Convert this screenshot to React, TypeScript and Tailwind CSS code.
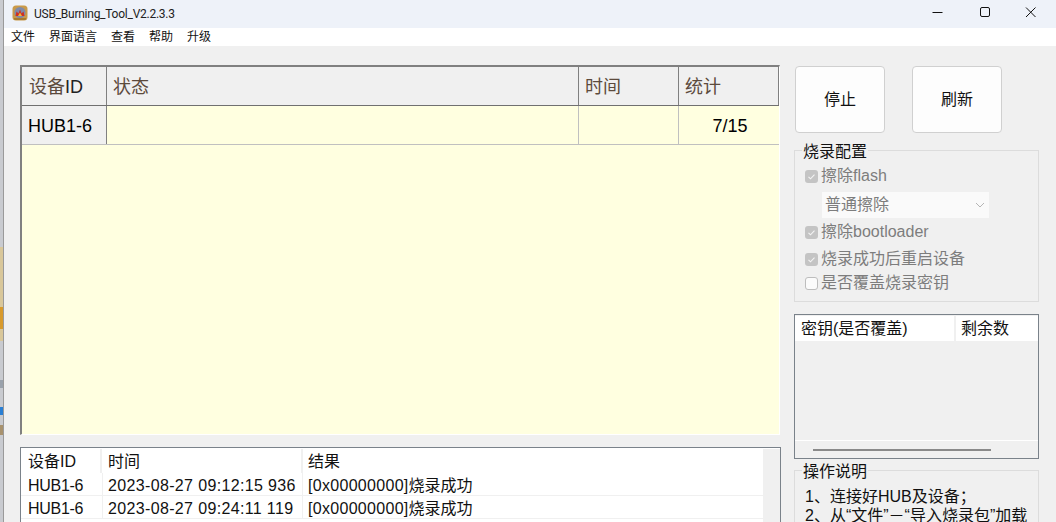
const cjk = "font-['Liberation_Sans','Noto_Sans_CJK_SC',sans-serif]";

const menus = ["文件", "界面语言", "查看", "帮助", "升级"];

const logRows = [
  { id: "HUB1-6", time: "2023-08-27 09:12:15 936", code: "[0x00000000]" },
  { id: "HUB1-6", time: "2023-08-27 09:24:11 119", code: "[0x00000000]" },
];

function AppLogo() {
  return (
    <svg width="16" height="16" viewBox="0 0 16 16" className="mt-[-2px]">
      <rect x="0.5" y="0.5" width="15" height="15" rx="3.5" fill="#c99a4a" />
      <path d="M2 13h12v1a1 1 0 0 1-1 1H3a1 1 0 0 1-1-1z" fill="#a87a30" />
      <circle cx="8" cy="7.5" r="5.5" fill="#7f8aa8" />
      <path d="M3.5 11l1-4.5 2 2 1.5-4 1.5 4 2-2 1 4.5z" fill="#cf2f22" />
      <path d="M6 11l2-3.5 2 3.5z" fill="#f0b53c" />
    </svg>
  );
}

function WindowButtons() {
  return (
    <div className="flex items-center">
      <svg width="46" height="28" viewBox="0 0 46 28">
        <path d="M16.5 12.5h10" stroke="#111" strokeWidth="1" />
      </svg>
      <svg width="46" height="28" viewBox="0 0 46 28">
        <rect x="18.5" y="7.5" width="9" height="9" rx="1.5" fill="none" stroke="#111" />
      </svg>
      <svg width="46" height="28" viewBox="0 0 46 28" className="mr-[2px]">
        <path d="M18 7.5l9.5 9.5M27.5 7.5L18 17" stroke="#111" strokeWidth="1" />
      </svg>
    </div>
  );
}

function HeaderCell({ className, children }: { className: string; children: React.ReactNode }) {
  return (
    <div className={`flex items-center h-full pt-[3px] border-r border-[#808080] text-[18px] text-[#5c4a3c] ${className}`}>
      {children}
    </div>
  );
}

function DeviceGrid() {
  return (
    <div className="w-[760px] h-[370px] bg-[#ffffe0] border-l-2 border-t-2 border-[#808080] border-r border-r-white border-b border-b-white flex flex-col">
      <div className="flex h-[39px] bg-[#f0f0f0] border-b border-[#707070]">
        <HeaderCell className="w-[85px] pl-[7px]">
          设备<span className="text-[#222]">ID</span>
        </HeaderCell>
        <HeaderCell className="w-[472px] pl-[6px]">状态</HeaderCell>
        <HeaderCell className="w-[100px] pl-[6px]">时间</HeaderCell>
        <HeaderCell className="flex-1 pl-[6px]">统计</HeaderCell>
      </div>
      <div className="flex h-[39px] border-b border-[#c0c0c0]">
        <div className="w-[85px] bg-[#f0f0f0] border-r border-[#808080] flex items-center pl-[6px] pt-[2px] text-[18px] text-black">
          HUB1-6
        </div>
        <div className="w-[472px] border-r border-[#c0c0c0]" />
        <div className="w-[100px] border-r border-[#c0c0c0]" />
        <div className="flex-1 flex items-center justify-center pt-[2px] pl-[2px] text-[18px] text-black">7/15</div>
      </div>
    </div>
  );
}

function LogList() {
  return (
    <div className="w-[761px] h-[80px] mt-[12px] border-l border-t border-r border-[#7a828a] bg-white flex text-[16px] text-[#111]">
      <div className="flex-1 flex flex-col">
        <div className="flex h-[24px] mt-[1px]">
          <div className="w-[81px] pl-[7px] leading-[25px] border-r-2 border-[#f0f0f0]">设备ID</div>
          <div className="w-[201px] pl-[6px] leading-[25px] border-r-2 border-[#f0f0f0]">时间</div>
          <div className="pl-[5px] leading-[25px]">结果</div>
        </div>
        {logRows.map((row) => (
          <div key={row.time} className="flex h-[23px] border-b border-[#f0f0f0]">
            <div className="w-[82px] pl-[7px] leading-[25px] border-r border-[#f0f0f0] tracking-[-0.3px]">{row.id}</div>
            <div className="w-[200px] pl-[5px] leading-[25px] border-r border-[#f0f0f0] whitespace-nowrap tracking-[0.35px]">
              {row.time}
            </div>
            <div className="pl-[5px] leading-[25px] whitespace-nowrap">
              <span className="tracking-[0.3px]">{row.code}</span>烧录成功
            </div>
          </div>
        ))}
      </div>
      <div className="w-[17px] h-full bg-[#f0f0f0] mt-[1px]" />
    </div>
  );
}

function CheckRow({ label, checked = true, className = "" }: { label: string; checked?: boolean; className?: string }) {
  return (
    <div className={`flex items-center h-[20px] text-[16px] text-[#7d7d7d] whitespace-nowrap ${className}`}>
      <span
        className={`w-[13px] h-[13px] rounded-[3px] mr-[3px] flex items-center justify-center ${
          checked ? "bg-[#c4c4c4]" : "bg-[#fbfbfb] border border-[#bdbdbd]"
        }`}
      >
        {checked && (
          <svg width="9" height="9" viewBox="0 0 9 9">
            <path d="M1.5 4.8l2 2 4-4.2" fill="none" stroke="#f4f4f4" strokeWidth="1.1" />
          </svg>
        )}
      </span>
      {label}
    </div>
  );
}

function SidePanel() {
  return (
    <div className="w-[245px] ml-[13px] flex flex-col">
      <div className="flex gap-[27px] mt-[20px] ml-[1px]">
        {["停止", "刷新"].map((label) => (
          <button
            key={label}
            className="w-[90px] h-[67px] bg-[#fdfdfd] border border-[#d0d0d0] rounded-[4px] text-[16px] text-[#111]"
          >
            {label}
          </button>
        ))}
      </div>

      <div className="relative w-[245px] h-[152px] mt-[17px] border border-[#dcdcdc] pt-[15px] pl-[10px]">
        <span className="absolute left-[7px] top-[-9px] bg-[#f0f0f0] px-[1px] text-[16px] leading-[20px] text-[#111]">
          烧录配置
        </span>
        <CheckRow label="擦除flash" />
        <div className="w-[167px] h-[26px] ml-[17px] mt-[6px] mb-[4px] bg-[#fafafa] flex items-center justify-between pl-[3px] pr-[4px] text-[16px] text-[#7d7d7d]">
          普通擦除
          <svg width="10" height="6" viewBox="0 0 10 6">
            <path d="M1 1l4 4 4-4" fill="none" stroke="#b5b5b5" />
          </svg>
        </div>
        <CheckRow label="擦除bootloader" />
        <CheckRow label="烧录成功后重启设备" className="mt-[7px]" />
        <CheckRow label="是否覆盖烧录密钥" checked={false} className="mt-[4px]" />
      </div>

      <div className="w-[245px] h-[145px] mt-[12px] border border-[#7a828a] flex flex-col">
        <div className="flex h-[25px] mt-[1px] bg-white text-[16px] text-[#111] leading-[26px]">
          <div className="w-[161px] pl-[6px] border-r-2 border-[#f0f0f0]">密钥(是否覆盖)</div>
          <div className="pl-[5px]">剩余数</div>
        </div>
        <div className="flex-1" />
        <div className="h-[18px] border-t border-white flex items-center pl-[18px]">
          <div className="w-[178px] h-[2px] bg-[#8a8a8a]" />
        </div>
      </div>

      <div className="relative w-[245px] h-[70px] mt-[11px] border-t border-l border-r border-[#dcdcdc] pt-[16px] pl-[10px] text-[16px] leading-[19px] text-[#111] whitespace-nowrap">
        <span className="absolute left-[7px] top-[-9px] bg-[#f0f0f0] px-[1px] leading-[20px]">操作说明</span>
        <div>1、连接好HUB及设备；</div>
        <div>2、从“文件”－“导入烧录包”加载</div>
      </div>
    </div>
  );
}

export default function App() {
  return (
    <div className={`w-[1056px] h-[522px] overflow-hidden flex ${cjk}`}>
      {/* sliver of the desktop behind the window */}
      <div className="w-[3px] h-full flex flex-col bg-[#c9cbd0]">
        <div className="h-[247px]" />
        <div className="h-[60px] bg-[#d9c79a]" />
        <div className="h-[22px] bg-[#d89a2c]" />
        <div className="h-[12px] bg-[#d9c79a]" />
        <div className="h-[39px]" />
        <div className="h-[8px] bg-[#9aa2ac]" />
        <div className="h-[19px]" />
        <div className="h-[8px] bg-[#2a7fd4]" />
        <div className="h-[10px]" />
        <div className="h-[10px] bg-[#a8926e]" />
      </div>
      <div className="w-[1053px] h-full flex flex-col border-l border-[#9a9a9a] bg-[#f0f0f0] rounded-tr-[8px]">
        <div className="h-[28px] shrink-0 bg-[#eef2f9] flex items-center justify-between pl-[8px]">
          <div className="flex items-center">
            <AppLogo />
            <span className="ml-[6px] text-[12px] text-[#222] tracking-[-0.25px] font-['Roboto',sans-serif]">
              USB_Burning_Tool_V2.2.3.3
            </span>
          </div>
          <WindowButtons />
        </div>
        <div className="h-[18px] shrink-0 bg-white flex items-center pl-[7px] gap-[14px] text-[12px] text-[#111]">
          {menus.map((m) => (
            <span key={m}>{m}</span>
          ))}
        </div>
        <div className="flex-1 flex pl-[16px]">
          <div className="w-[761px] pt-[19px] flex flex-col">
            <DeviceGrid />
            <LogList />
          </div>
          <SidePanel />
        </div>
      </div>
    </div>
  );
}
